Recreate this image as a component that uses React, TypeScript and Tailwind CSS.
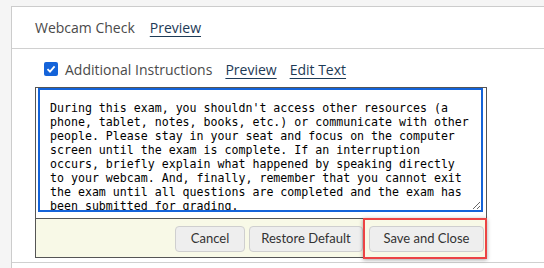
import React from 'react';

const instructions =
  "During this exam, you shouldn't access other resources (a phone, tablet, notes, books, etc.) or communicate with other people. Please stay in your seat and focus on the computer screen until the exam is complete. If an interruption occurs, briefly explain what happened by speaking directly to your webcam. And, finally, remember that you cannot exit the exam until all questions are completed and the exam has been submitted for grading.";

const linkCls = "text-[#1d3a56] underline underline-offset-[3px] decoration-1";

const App: React.FC = () => {
  return (
    <div className="h-[268px] overflow-hidden bg-[#f5f5f5] pl-[11px] pt-[6px] font-['Open_Sans',sans-serif]">
      <div className="h-full border-l border-t border-[#cccccc] bg-white">
        {/* header */}
        <div className="flex h-[42px] items-center gap-[15px] border-b border-[#d0d0d0] pl-[23px] text-[14px] text-[#4a4a4a]">
          <span>Webcam Check</span>
          <a className={linkCls}>Preview</a>
        </div>

        {/* additional instructions */}
        <div className="border-b border-[#d0d0d0] pl-[23px] pb-[4px]">
          <div className="flex h-[38px] items-center pl-[9px] pt-[2px] text-[14px] text-[#4a4a4a]">
            <span className="mr-[7px] flex h-[14px] w-[14px] items-center justify-center rounded-[2px] bg-[#1463d9]">
              <svg width="10" height="10" viewBox="0 0 10 10">
                <path d="M1.5 5.2 L4 7.6 L8.6 2.4" fill="none" stroke="white" strokeWidth="1.8" />
              </svg>
            </span>
            <span>Additional Instructions</span>
            <a className={linkCls + " ml-[13px]"}>Preview</a>
            <a className={linkCls + " ml-[13px]"}>Edit Text</a>
          </div>

          <div className="w-[452px] border border-[#555555]">
            <textarea
              defaultValue={instructions}
              className="ml-[2px] block h-[124px] w-[445px] overflow-hidden border-2 border-[#1463d9] bg-white pl-[10px] pr-[8px] pt-[11px] font-['DejaVu_Sans_Mono',monospace] text-[11.6px] leading-[14px] text-black outline-none"
            />
            <div className="mt-[6px] flex h-[39px] items-start justify-end border-t border-[#555555] bg-[#f8f9e7] pr-[2px] pt-[7px] font-['Lato',sans-serif] text-[13px] text-[#333333]">
              <button className="h-[26px] w-[70px] rounded-[4px] border border-[#cfcfcf] bg-[#eeeeee]">Cancel</button>
              <button className="ml-[4px] h-[26px] w-[114px] rounded-[4px] border border-[#cfcfcf] bg-[#eeeeee]">Restore Default</button>
              <div className="relative ml-[6px]">
                <button className="h-[26px] w-[115px] rounded-[4px] border border-[#cfcfcf] bg-[#eeeeee]">Save and Close</button>
                <span className="pointer-events-none absolute -left-[6px] -right-[3px] -top-[8px] -bottom-[7px] border-2 border-[#ec4444] shadow-[0_1px_4px_rgba(0,0,0,0.35)]" />
              </div>
            </div>
          </div>
        </div>
      </div>
    </div>
  );
};

export default App;
